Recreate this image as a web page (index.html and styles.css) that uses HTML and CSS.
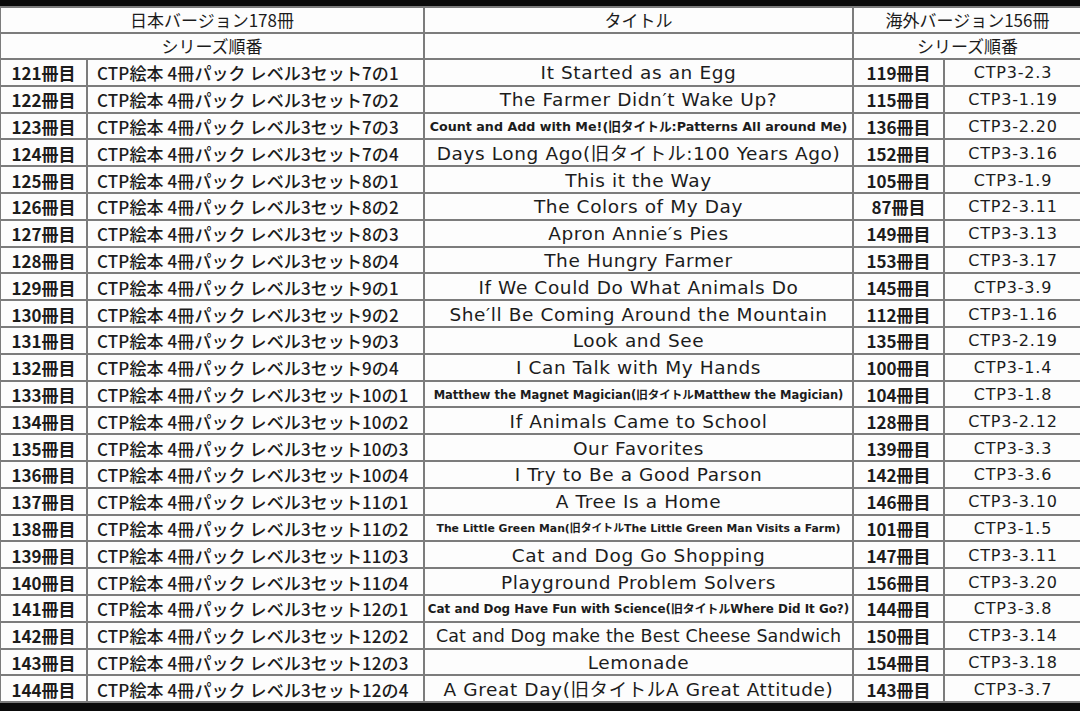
FILE: index.html
```html
<!DOCTYPE html>
<html lang="ja">
<head>
<meta charset="utf-8">
<title>CTP</title>
<link rel="stylesheet" href="styles.css">
</head>
<body>
<div class="sheet">
<table class="grid">
<colgroup><col class="c1"><col class="c2"><col class="c3"><col class="c4"><col class="c5"></colgroup>
<thead>
<tr class="h"><th colspan="2">日本バージョン178冊</th><th>タイトル</th><th colspan="2">海外バージョン156冊</th></tr>
<tr class="h"><th colspan="2">シリーズ順番</th><th></th><th colspan="2">シリーズ順番</th></tr>
</thead>
<tbody>
<tr><td class="n">121冊目</td><td class="s">CTP絵本 4冊パック レベル3セット7の1</td><td class="t">It Started as an Egg</td><td class="n">119冊目</td><td class="k">CTP3-2.3</td></tr>
<tr><td class="n">122冊目</td><td class="s">CTP絵本 4冊パック レベル3セット7の2</td><td class="t">The Farmer Didn′t Wake Up?</td><td class="n">115冊目</td><td class="k">CTP3-1.19</td></tr>
<tr><td class="n">123冊目</td><td class="s">CTP絵本 4冊パック レベル3セット7の3</td><td class="t sm1">Count and Add with Me!(旧タイトル:Patterns All around Me)</td><td class="n">136冊目</td><td class="k">CTP3-2.20</td></tr>
<tr><td class="n">124冊目</td><td class="s">CTP絵本 4冊パック レベル3セット7の4</td><td class="t">Days Long Ago(旧タイトル:100 Years Ago)</td><td class="n">152冊目</td><td class="k">CTP3-3.16</td></tr>
<tr><td class="n">125冊目</td><td class="s">CTP絵本 4冊パック レベル3セット8の1</td><td class="t">This it the Way</td><td class="n">105冊目</td><td class="k">CTP3-1.9</td></tr>
<tr><td class="n">126冊目</td><td class="s">CTP絵本 4冊パック レベル3セット8の2</td><td class="t">The Colors of My Day</td><td class="n">87冊目</td><td class="k">CTP2-3.11</td></tr>
<tr><td class="n">127冊目</td><td class="s">CTP絵本 4冊パック レベル3セット8の3</td><td class="t">Apron Annie′s Pies</td><td class="n">149冊目</td><td class="k">CTP3-3.13</td></tr>
<tr><td class="n">128冊目</td><td class="s">CTP絵本 4冊パック レベル3セット8の4</td><td class="t">The Hungry Farmer</td><td class="n">153冊目</td><td class="k">CTP3-3.17</td></tr>
<tr><td class="n">129冊目</td><td class="s">CTP絵本 4冊パック レベル3セット9の1</td><td class="t">If We Could Do What Animals Do</td><td class="n">145冊目</td><td class="k">CTP3-3.9</td></tr>
<tr><td class="n">130冊目</td><td class="s">CTP絵本 4冊パック レベル3セット9の2</td><td class="t">She′ll Be Coming Around the Mountain</td><td class="n">112冊目</td><td class="k">CTP3-1.16</td></tr>
<tr><td class="n">131冊目</td><td class="s">CTP絵本 4冊パック レベル3セット9の3</td><td class="t">Look and See</td><td class="n">135冊目</td><td class="k">CTP3-2.19</td></tr>
<tr><td class="n">132冊目</td><td class="s">CTP絵本 4冊パック レベル3セット9の4</td><td class="t">I Can Talk with My Hands</td><td class="n">100冊目</td><td class="k">CTP3-1.4</td></tr>
<tr><td class="n">133冊目</td><td class="s">CTP絵本 4冊パック レベル3セット10の1</td><td class="t sm2">Matthew the Magnet Magician(旧タイトルMatthew the Magician)</td><td class="n">104冊目</td><td class="k">CTP3-1.8</td></tr>
<tr><td class="n">134冊目</td><td class="s">CTP絵本 4冊パック レベル3セット10の2</td><td class="t">If Animals Came to School</td><td class="n">128冊目</td><td class="k">CTP3-2.12</td></tr>
<tr><td class="n">135冊目</td><td class="s">CTP絵本 4冊パック レベル3セット10の3</td><td class="t">Our Favorites</td><td class="n">139冊目</td><td class="k">CTP3-3.3</td></tr>
<tr><td class="n">136冊目</td><td class="s">CTP絵本 4冊パック レベル3セット10の4</td><td class="t">I Try to Be a Good Parson</td><td class="n">142冊目</td><td class="k">CTP3-3.6</td></tr>
<tr><td class="n">137冊目</td><td class="s">CTP絵本 4冊パック レベル3セット11の1</td><td class="t">A Tree Is a Home</td><td class="n">146冊目</td><td class="k">CTP3-3.10</td></tr>
<tr><td class="n">138冊目</td><td class="s">CTP絵本 4冊パック レベル3セット11の2</td><td class="t sm3">The Little Green Man(旧タイトルThe Little Green Man Visits a Farm)</td><td class="n">101冊目</td><td class="k">CTP3-1.5</td></tr>
<tr><td class="n">139冊目</td><td class="s">CTP絵本 4冊パック レベル3セット11の3</td><td class="t">Cat and Dog Go Shopping</td><td class="n">147冊目</td><td class="k">CTP3-3.11</td></tr>
<tr><td class="n">140冊目</td><td class="s">CTP絵本 4冊パック レベル3セット11の4</td><td class="t">Playground Problem Solvers</td><td class="n">156冊目</td><td class="k">CTP3-3.20</td></tr>
<tr><td class="n">141冊目</td><td class="s">CTP絵本 4冊パック レベル3セット12の1</td><td class="t sm4">Cat and Dog Have Fun with Science(旧タイトルWhere Did It Go?)</td><td class="n">144冊目</td><td class="k">CTP3-3.8</td></tr>
<tr><td class="n">142冊目</td><td class="s">CTP絵本 4冊パック レベル3セット12の2</td><td class="t long">Cat and Dog make the Best Cheese Sandwich</td><td class="n">150冊目</td><td class="k">CTP3-3.14</td></tr>
<tr><td class="n">143冊目</td><td class="s">CTP絵本 4冊パック レベル3セット12の3</td><td class="t">Lemonade</td><td class="n">154冊目</td><td class="k">CTP3-3.18</td></tr>
<tr><td class="n">144冊目</td><td class="s">CTP絵本 4冊パック レベル3セット12の4</td><td class="t">A Great Day(旧タイトルA Great Attitude)</td><td class="n">143冊目</td><td class="k">CTP3-3.7</td></tr>
</tbody>
</table>
</div>
</body>
</html>
```
FILE: styles.css
```css
html, body {
  margin: 0;
  padding: 0;
  background: #0a0a0a;
  width: 1080px;
  height: 711px;
  overflow: hidden;
}
.sheet {
  padding-top: 6px;
  background: #0a0a0a;
}
.grid {
  width: 1082px;
  margin-left: -1px;
  border-collapse: collapse;
  table-layout: fixed;
  background: #fdfdfd;
  color: #1c1c1c;
  font-family: "DejaVu Sans", "Noto Sans CJK JP", sans-serif;
}
.c1 { width: 87px; }
.c2 { width: 337px; }
.c3 { width: 429px; }
.c4 { width: 91px; }
.c5 { width: 138px; }
.grid th, .grid td {
  border: 2px solid #7c7c7c;
  padding: 0;
  white-space: nowrap;
  overflow: hidden;
  text-align: center;
  vertical-align: middle;
}
.grid tr.h th {
  height: 24px;
  font-family: "Noto Sans CJK JP", sans-serif;
  font-weight: 400;
  font-size: 17px;
  line-height: 24px;
}
.grid tbody td {
  height: 22.8px;
  padding-top: 2px;
  line-height: 22px;
}
.n {
  font-family: "Noto Sans CJK JP", sans-serif;
  font-weight: 700;
  font-size: 17px;
}
.s {
  text-align: left !important;
  padding-left: 9px !important;
  font-family: "Noto Sans CJK JP", sans-serif;
  font-weight: 500;
  font-size: 17px;
  letter-spacing: 0.1px;
}
.t {
  font-family: "DejaVu Sans", "Noto Sans CJK JP", sans-serif;
  font-size: 18.5px;
  letter-spacing: 0.6px;
}
.grid td.long {
  font-size: 17.5px;
  letter-spacing: 0.1px;
}
.k {
  font-family: "DejaVu Sans", sans-serif;
  font-size: 16px;
  letter-spacing: 0.8px;
}
.sm1, .sm2, .sm3, .sm4 {
  font-weight: 700;
  letter-spacing: 0;
}
.sm1 { font-size: 12.7px; }
.sm2 { font-size: 11.5px; }
.sm3 { font-size: 10.85px; }
.sm4 { font-size: 11.9px; }
```
